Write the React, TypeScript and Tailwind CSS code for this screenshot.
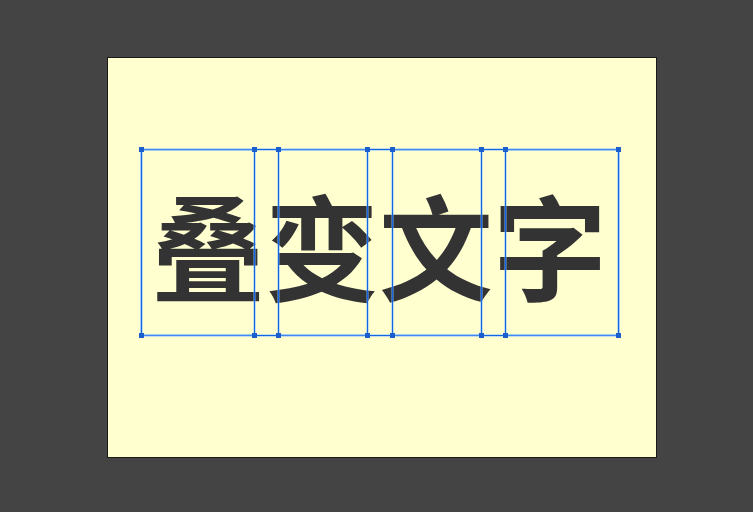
import React from 'react';

// widths of the four text frames, left to right
const frames = [114, 90, 90, 114];

// soft light-blue glow on both sides of a 1px frame line
const glow = 'shadow-[0_0_0_1px_rgba(120,180,255,0.45),inset_0_0_0_1px_rgba(120,180,255,0.45)]';

function Handle({ pos }: { pos: string }) {
    return <div className={`absolute w-[5px] h-[5px] bg-[#1a5fcc] ${pos}`} />;
}

function Frame({ width }: { width: number }) {
    return (
        <div className={`relative h-full border-x border-[#1466e0] shrink-0 ${glow}`} style={{ width }}>
            <Handle pos="-left-[3px] -top-[3px]" />
            <Handle pos="-right-[3px] -top-[3px]" />
            <Handle pos="-left-[3px] -bottom-[3px]" />
            <Handle pos="-right-[3px] -bottom-[3px]" />
        </div>
    );
}

export default function App() {
    return (
        <div className="w-[753px] h-[512px] bg-[#444444] pt-[57px] pl-[107px] overflow-hidden">
            <div className="relative w-[550px] h-[401px] bg-[#ffffd0] border border-[#1a1a1a]">
                <div
                    className="pl-[43px] pt-[128px] text-[114px] leading-none font-bold text-[#333333] flex"
                    style={{ fontFamily: '"Noto Sans CJK SC", "Noto Sans", sans-serif' }}
                >
                    <span>叠</span>
                    <span>变</span>
                    <span>文</span>
                    <span>字</span>
                </div>

                {/* selection frames drawn over the text */}
                <div className={`absolute left-[33px] top-[91px] w-[478px] h-[187px] border-y border-[#1466e0] flex justify-between pointer-events-none ${glow}`}>
                    {frames.map((w, i) => (
                        <Frame key={i} width={w} />
                    ))}
                </div>
            </div>
        </div>
    );
}
